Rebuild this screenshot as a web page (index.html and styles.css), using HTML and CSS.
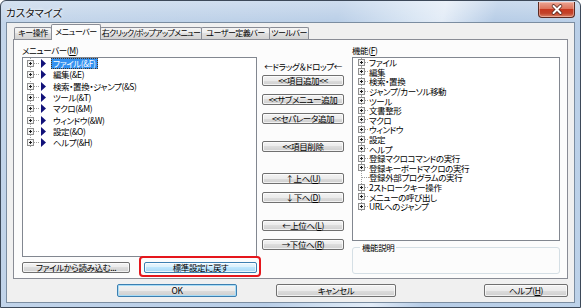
FILE: index.html
```html
<!DOCTYPE html>
<html lang="ja">
<head>
    <meta charset="UTF-8">
    <meta name="viewport" content="width=device-width, initial-scale=1.0">
    <title>カスタマイズ</title>
    <link rel="stylesheet" href="styles.css">
</head>
<body>

    <!-- tree glyphs, reused below -->
    <svg class="defs" width="0" height="0">
        <symbol id="twistyL" viewBox="0 0 12 11">
            <path d="M3.5 0V2M3.5 9V11M7 5.5H12" stroke="#a0a0a0" stroke-dasharray="1 1" fill="none"/>
            <rect x="0.5" y="2.5" width="6" height="6" fill="#f4f4f4" stroke="#8f8f8f"/>
            <path d="M2 5.5H5M3.5 4V7" stroke="#1e1e1e" fill="none"/>
        </symbol>
        <symbol id="twistyR" viewBox="0 0 11 10">
            <path d="M3.5 0V1M3.5 8V10M7 4.5H11" stroke="#a0a0a0" stroke-dasharray="1 1" fill="none"/>
            <rect x="0.5" y="1.5" width="6" height="6" fill="#f4f4f4" stroke="#8f8f8f"/>
            <path d="M2 4.5H5M3.5 3V6" stroke="#1e1e1e" fill="none"/>
        </symbol>
        <symbol id="leafR" viewBox="0 0 11 10">
            <path d="M3.5 0V10M4 4.5H11" stroke="#a0a0a0" stroke-dasharray="1 1" fill="none"/>
        </symbol>
        <symbol id="arrow" viewBox="0 0 6 9">
            <polygon points="0,0 5,4.5 0,9" fill="#12127a"/>
        </symbol>
    </svg>

    <div class="window">
        <div class="titlebar">
            <div class="title">カスタマイズ</div>
            <div class="close">
                <svg width="36" height="15" viewBox="0 0 36 15">
                    <path d="M14.5 4L21.5 11M21.5 4L14.5 11" stroke="#5a2a22" stroke-width="3.6" stroke-linecap="round"/>
                    <path d="M14.5 4L21.5 11M21.5 4L14.5 11" stroke="#ffffff" stroke-width="2" stroke-linecap="round"/>
                </svg>
            </div>
        </div>

        <div class="client">
            <div class="tabs">
                <div class="tab tab-key">キー操作</div>
                <div class="tab tab-menu active">メニューバー</div>
                <div class="tab tab-popup">右クリック/ポップアップメニュー</div>
                <div class="tab tab-user">ユーザー定義バー</div>
                <div class="tab tab-tool">ツールバー</div>
            </div>

            <div class="panel">
                <div class="col-left">
                    <div class="label">メニューバー(<u>M</u>)</div>
                    <div class="listbox menu-tree">
                        <div class="node"><svg class="twisty"><use href="#twistyL"/></svg><svg class="arrow"><use href="#arrow"/></svg><span class="text selected">ファイル(&amp;F)</span></div>
                        <div class="node"><svg class="twisty"><use href="#twistyL"/></svg><svg class="arrow"><use href="#arrow"/></svg><span class="text">編集(&amp;E)</span></div>
                        <div class="node"><svg class="twisty"><use href="#twistyL"/></svg><svg class="arrow"><use href="#arrow"/></svg><span class="text">検索・置換・ジャンプ(&amp;S)</span></div>
                        <div class="node"><svg class="twisty"><use href="#twistyL"/></svg><svg class="arrow"><use href="#arrow"/></svg><span class="text">ツール(&amp;T)</span></div>
                        <div class="node"><svg class="twisty"><use href="#twistyL"/></svg><svg class="arrow"><use href="#arrow"/></svg><span class="text">マクロ(&amp;M)</span></div>
                        <div class="node"><svg class="twisty"><use href="#twistyL"/></svg><svg class="arrow"><use href="#arrow"/></svg><span class="text">ウィンドウ(&amp;W)</span></div>
                        <div class="node"><svg class="twisty"><use href="#twistyL"/></svg><svg class="arrow"><use href="#arrow"/></svg><span class="text">設定(&amp;O)</span></div>
                        <div class="node"><svg class="twisty"><use href="#twistyL"/></svg><svg class="arrow"><use href="#arrow"/></svg><span class="text">ヘルプ(&amp;H)</span></div>
                    </div>
                    <div class="file-buttons">
                        <button class="btn btn-load">ファイルから読み込む...</button>
                        <div class="mark">
                            <button class="btn btn-hot btn-reset">標準設定に戻す</button>
                            <div class="mark-ring"></div>
                        </div>
                    </div>
                </div>

                <div class="col-mid">
                    <div class="drag-hint">←ドラッグ＆ドロップ←</div>
                    <button class="btn mid first">&lt;&lt;項目追加&lt;&lt;</button>
                    <button class="btn mid">&lt;&lt;サブメニュー追加</button>
                    <button class="btn mid">&lt;&lt;セパレータ追加</button>
                    <button class="btn mid gap-l">&lt;&lt;項目削除</button>
                    <button class="btn mid gap-xl">↑上へ(<u>U</u>)</button>
                    <button class="btn mid">↓下へ(<u>D</u>)</button>
                    <button class="btn mid gap-l">←上位へ(<u>L</u>)</button>
                    <button class="btn mid">→下位へ(<u>R</u>)</button>
                </div>

                <div class="col-right">
                    <div class="label">機能(<u>F</u>)</div>
                    <div class="listbox func-tree">
                        <div class="item"><svg class="twisty"><use href="#twistyR"/></svg><span>ファイル</span></div>
                        <div class="item"><svg class="twisty"><use href="#twistyR"/></svg><span>編集</span></div>
                        <div class="item"><svg class="twisty"><use href="#twistyR"/></svg><span>検索・置換</span></div>
                        <div class="item"><svg class="twisty"><use href="#twistyR"/></svg><span>ジャンプ/カーソル移動</span></div>
                        <div class="item"><svg class="twisty"><use href="#twistyR"/></svg><span>ツール</span></div>
                        <div class="item"><svg class="twisty"><use href="#twistyR"/></svg><span>文書整形</span></div>
                        <div class="item"><svg class="twisty"><use href="#twistyR"/></svg><span>マクロ</span></div>
                        <div class="item"><svg class="twisty"><use href="#twistyR"/></svg><span>ウィンドウ</span></div>
                        <div class="item"><svg class="twisty"><use href="#twistyR"/></svg><span>設定</span></div>
                        <div class="item"><svg class="twisty"><use href="#twistyR"/></svg><span>ヘルプ</span></div>
                        <div class="item"><svg class="twisty"><use href="#twistyR"/></svg><span>登録マクロコマンドの実行</span></div>
                        <div class="item"><svg class="twisty"><use href="#twistyR"/></svg><span>登録キーボードマクロの実行</span></div>
                        <div class="item"><svg class="twisty"><use href="#leafR"/></svg><span>登録外部プログラムの実行</span></div>
                        <div class="item"><svg class="twisty"><use href="#twistyR"/></svg><span>2ストロークキー操作</span></div>
                        <div class="item"><svg class="twisty"><use href="#twistyR"/></svg><span>メニューの呼び出し</span></div>
                        <div class="item"><svg class="twisty"><use href="#twistyR"/></svg><span>URLへのジャンプ</span></div>
                    </div>
                    <fieldset class="describe">
                        <legend>機能説明</legend>
                    </fieldset>
                </div>
            </div>

            <div class="dialog-buttons">
                <button class="btn btn-dlg btn-default btn-ok">OK</button>
                <button class="btn btn-dlg btn-cancel">キャンセル</button>
                <button class="btn btn-dlg btn-help">ヘルプ(<u>H</u>)</button>
            </div>
        </div>
    </div>

</body>
</html>
```

FILE: styles.css
```css
/* Base */
* {
    box-sizing: border-box;
}

body {
    margin: 0;
    font-family: "Noto Sans CJK JP", "Noto Sans", sans-serif;
    font-feature-settings: "palt";
    font-size: 8.5px;
    letter-spacing: -0.4px;
    color: #000;
    background: #ffffff;
}

.defs {
    display: block;
    width: 0;
    height: 0;
    overflow: hidden;
}

u {
    text-decoration: underline;
    text-underline-offset: 1px;
}

/* Window frame (Vista style) */
.window {
    width: 581px;
    height: 308px;
    border: 1px solid #3d4959;
    border-radius: 6px 6px 0 0;
    padding: 0 5px 4px;
    display: flex;
    flex-direction: column;
    background:
        linear-gradient(to bottom, rgba(255, 255, 255, 0.3), rgba(255, 255, 255, 0) 22px),
        linear-gradient(104deg, #c3d5ea 0%, #b9cee7 52%, #d9e6f4 64%, #e3ecf7 68%, #b6cce6 76%, #bdd2e9 100%);
}

.titlebar {
    height: 21px;
    display: flex;
    align-items: flex-start;
}

.title {
    padding-top: 5px;
    font-size: 10.5px;
    line-height: 13px;
    letter-spacing: 0;
    color: #111;
    text-shadow: 0 0 4px #f4f8fc, 0 0 2px #ffffff;
}

.close {
    margin-left: auto;
    margin-top: 1px;
    width: 37px;
    height: 16px;
    border: 1px solid #5b2a22;
    border-top: none;
    border-radius: 0 0 4px 4px;
    background: linear-gradient(to bottom, #eaa493 0%, #dd745c 45%, #c7381f 50%, #c2432a 75%, #db8368 100%);
    box-shadow: inset 0 0 0 1px rgba(255, 220, 210, 0.45);
}

.close svg {
    display: block;
}

/* Client area */
.client {
    height: 281px;
    border: 1px solid #7b8da1;
    background: #f0f0f0;
    padding: 1px 6px 0;
    display: flex;
    flex-direction: column;
}

/* Tabs */
.tabs {
    height: 15px;
    display: flex;
    align-items: flex-end;
}

.tab {
    height: 12px;
    margin-left: -1px;
    border: 1px solid #898c95;
    border-bottom: none;
    border-radius: 2px 2px 0 0;
    background: linear-gradient(to bottom, #f4f4f4 0%, #ececec 50%, #dfdfdf 50%, #d2d2d2 100%);
    font-size: 8px;
    letter-spacing: -0.5px;
    text-align: center;
    line-height: 10px;
    white-space: nowrap;
}

.tab-key { width: 38px; margin-left: 1px; }
.tab-menu { width: 50px; }
.tab-popup { width: 102px; letter-spacing: -0.7px; }
.tab-user { width: 69px; }
.tab-tool { width: 40px; }

.tab.active {
    height: 16px;
    margin-bottom: -1px;
    background: #fcfcfc;
    line-height: 14px;
    position: relative;
    z-index: 1;
}

/* Tab page */
.panel {
    height: 240px;
    border: 1px solid #898c95;
    background: #fcfcfc;
    padding: 5px 7px 0 8px;
    display: flex;
}

.label {
    height: 11px;
    line-height: 11px;
    margin-bottom: 1px;
    white-space: nowrap;
}

.listbox {
    border: 1px solid #828790;
    background: #ffffff;
    overflow: hidden;
}

/* Left column: menu bar tree */
.col-left {
    width: 235px;
    display: flex;
    flex-direction: column;
}

.menu-tree {
    height: 200px;
}

.node {
    height: 11.3px;
    display: flex;
    align-items: center;
    white-space: nowrap;
}

.node .twisty {
    width: 12px;
    height: 11px;
    margin-left: 4px;
    flex: none;
}

.node .arrow {
    width: 6px;
    height: 9px;
    margin-left: 2px;
    flex: none;
}

.node .text {
    margin-left: 4px;
    padding: 0 2px 0 1px;
    line-height: 9px;
    border: 1px solid transparent;
}

.node .text.selected {
    background: #3491f0;
    color: #ffffff;
    border: 1px dotted #4a3420;
}

.file-buttons {
    margin-top: 5px;
    display: flex;
    justify-content: space-between;
}

.btn-load {
    width: 108px;
}

.mark {
    position: relative;
    width: 113px;
}

.btn-reset {
    width: 113px;
}

/* red annotation around the reset button */
.mark-ring {
    position: absolute;
    top: -6px;
    left: -5px;
    right: -4px;
    bottom: -4px;
    border: 2px solid #e5161c;
    border-radius: 4px;
}

/* Buttons */
.btn {
    display: block;
    height: 11px;
    padding: 0;
    border: 1px solid #707070;
    border-radius: 2px;
    background: linear-gradient(to bottom, #f3f3f3 0%, #ebebeb 50%, #dddddd 50%, #cfcfcf 100%);
    box-shadow: inset 0 0 0 1px rgba(255, 255, 255, 0.7);
    font-family: inherit;
    font-feature-settings: "palt";
    font-size: 8.5px;
    letter-spacing: -0.4px;
    line-height: 9px;
    color: #000;
    white-space: nowrap;
    text-align: center;
}

.btn-hot {
    border-color: #3c7fb1;
    background: linear-gradient(to bottom, #eaf6fd 0%, #d9f0fc 50%, #bee6fd 50%, #a7d9f5 100%);
}

/* Middle column */
.col-mid {
    width: 82px;
    margin-left: 5px;
    padding-top: 16px;
    display: flex;
    flex-direction: column;
}

.drag-hint {
    height: 11px;
    line-height: 11px;
    text-align: center;
    white-space: nowrap;
}

.btn.mid {
    width: 100%;
    margin-top: 8px;
}

.btn.mid.first { margin-top: 3px; }
.btn.mid.gap-l { margin-top: 17px; }
.btn.mid.gap-xl { margin-top: 21px; }

/* Right column: function tree */
.col-right {
    width: 208px;
    margin-left: 8px;
    display: flex;
    flex-direction: column;
}

.func-tree {
    height: 184px;
}

.item {
    height: 9.6px;
    display: flex;
    align-items: center;
    white-space: nowrap;
    line-height: 9px;
}

.item .twisty {
    width: 11px;
    height: 10px;
    margin-left: 5px;
    flex: none;
}

.describe {
    margin: 1px 0 0;
    height: 32px;
    padding: 0 6px;
    border: 1px solid #d5dfe5;
    border-radius: 3px;
}

.describe legend {
    margin-left: 1px;
    padding: 0 2px;
    font-size: 8.5px;
    line-height: 10px;
}

/* Dialog buttons */
.dialog-buttons {
    margin-top: 5px;
    display: flex;
}

.btn-dlg {
    height: 13px;
    line-height: 11px;
}

.btn-ok {
    width: 120px;
    margin-left: 104px;
}

.btn-default {
    border-color: #3c7fb1;
    box-shadow: inset 0 0 0 1px #a8dcf6;
}

.btn-cancel {
    width: 120px;
    margin-left: 39px;
}

.btn-help {
    width: 84px;
    margin-left: auto;
}
```
